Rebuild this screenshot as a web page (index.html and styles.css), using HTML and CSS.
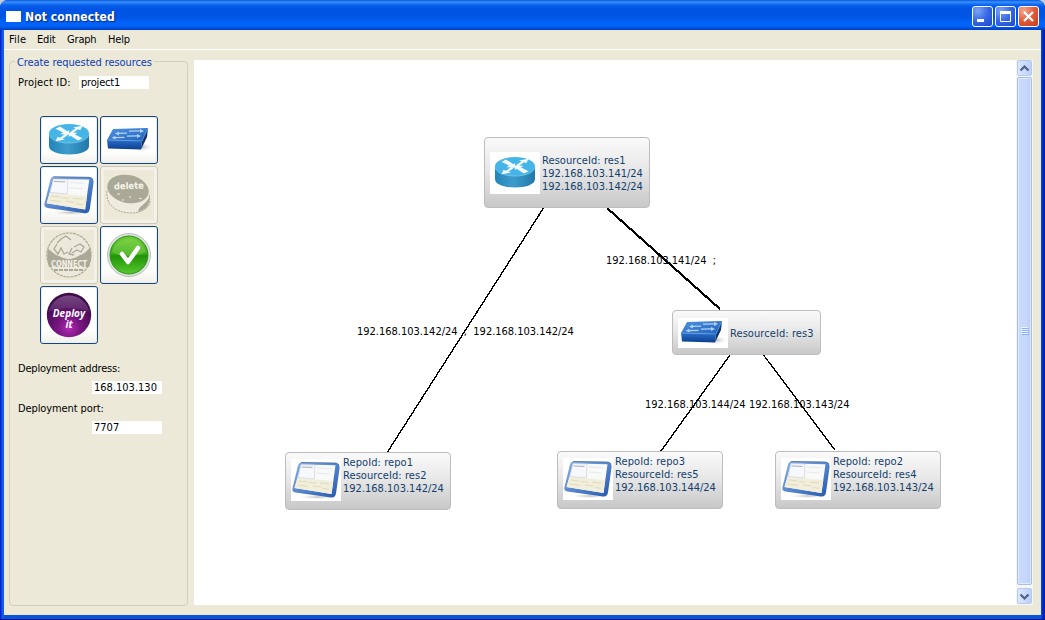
FILE: index.html
```html
<!DOCTYPE html>
<html lang="en">
<head>
<meta charset="utf-8">
<title>Not connected</title>
<link rel="stylesheet" href="styles.css">
</head>
<body>
<svg class="defs" width="0" height="0" aria-hidden="true">
  <defs>
    <linearGradient id="routerSide" x1="0" x2="1" y1="0" y2="0"><stop offset="0" stop-color="#2384b8"/><stop offset=".45" stop-color="#3e9ccb"/><stop offset="1" stop-color="#1f79ab"/></linearGradient>
    <linearGradient id="switchTop" x1="0" x2="1" y1="0" y2="1"><stop offset="0" stop-color="#5193df"/><stop offset="1" stop-color="#1e62bd"/></linearGradient>
    <linearGradient id="switchFront" x1="0" x2="0" y1="0" y2="1"><stop offset="0" stop-color="#2a6fc8"/><stop offset="1" stop-color="#0b3f90"/></linearGradient>
    <linearGradient id="frame" x1="0" x2="1" y1="0" y2="1"><stop offset="0" stop-color="#8db2e2"/><stop offset=".5" stop-color="#5585cc"/><stop offset="1" stop-color="#2458ae"/></linearGradient>
    <linearGradient id="green" x1="0" x2="0" y1="0" y2="1"><stop offset="0" stop-color="#6fce38"/><stop offset=".48" stop-color="#38a917"/><stop offset=".52" stop-color="#209407"/><stop offset="1" stop-color="#58c82d"/></linearGradient>
    <radialGradient id="purple" cx=".5" cy=".8" r=".65"><stop offset="0" stop-color="#b32ab5"/><stop offset=".4" stop-color="#781580"/><stop offset="1" stop-color="#3e0a4c"/></radialGradient>
    <linearGradient id="gloss" x1="0" x2="0" y1="0" y2="1"><stop offset="0" stop-color="#8a5c93"/><stop offset="1" stop-color="#5d286c"/></linearGradient>
    <radialGradient id="shade"><stop offset="0" stop-color="#888" stop-opacity=".6"/><stop offset="1" stop-color="#fff" stop-opacity="0"/></radialGradient>
  </defs>
  <symbol id="router" viewBox="0 0 50 40">
    <path d="M5 13v13c0 5.500 9 8.500 20 8.500s20-3 20-8.500V13z" fill="url(#routerSide)"/>
    <ellipse cx="25" cy="13.500" rx="20" ry="9.500" fill="#45b5e8"/>
    <path d="M5 13.500c0 12.700 40 12.700 40 0" fill="none" stroke="#83cdef" stroke-width=".7"/>
    <path d="M11.500 8.800l4.500-2.300 7.500 4.800 1.800-1.300-.3 4.500-8.500-.3 2.500-1.600zM38.500 18.200l-4.500 2.300-7.500-4.800-1.800 1.300.3-4.500 8.500.3-2.500 1.600zM26 12.300l5.500-4-2.500-.9 9.500-1.600-2.200 4.400-2.300-1-5.500 4zM24 14.700l-5.500 4 2.500.9-9.500 1.600 2.200-4.400 2.300 1 5.500-4z" fill="#f4fbff"/>
  </symbol>
  <symbol id="switch" viewBox="0 0 50 30">
    <ellipse cx="38" cy="22" rx="12" ry="5" fill="url(#shade)"/>
    <path d="M3 15L9 4l35-1-6 13z" fill="url(#switchTop)"/>
    <path d="M3 15l35 1-1 8.500L4 23.500z" fill="url(#switchFront)"/>
    <path d="M38 16l6-13-1 9-6 12.500z" fill="#10356f"/>
    <path d="M3 15l35 1 6-13" fill="none" stroke="#65a4e8" stroke-width=".6"/>
    <path d="M11 8.500l4-2v1.200l8-.3v1.300l-8 .3v1.400zM40 6l-4-2v1.300l-11 .2v1.200l11-.2V8zM7.500 12.700l4-2V12l9-.2V13l-9 .2v1.400zM37 11l-4-2v1.300l-10 .2v1.200l10-.2V13z" fill="#b3d1f2"/>
  </symbol>
  <symbol id="screen" viewBox="0 0 50 42">
    <ellipse cx="27" cy="38" rx="21" ry="2.500" fill="url(#shade)"/>
    <path d="M10 3.500L44 4q5 .4 4.600 5L45 34.500q-.8 4.500-5 4L4.500 33.500q-4-.7-3-4.500L7 6.500Q7.800 3.600 10 3.500z" fill="url(#frame)"/>
    <path d="M10 3.500L44 4q3 .2 4 2" fill="none" stroke="#4069a5" stroke-width=".8"/>
    <path d="M10 5.500l34.500.7L40.500 35 3.500 29z" fill="#f8f9f9"/>
    <path d="M6.800 19l35.400 3-1.700 13L3.500 29z" fill="#f1eedc"/>
    <path d="M10 5.700l14 .3-.7 14-16.300-1.500z" fill="#f7f8fb" stroke="#c8ccd5" stroke-width=".6"/>
    <path d="M10.500 8l11 .4" stroke="#969ca8" stroke-width=".8"/>
    <path d="M26 9l14 .7M25.500 14l13 1" stroke="#e0e3e9" stroke-width=".8"/>
    <path d="M8 22l8 .8M18 23.500l7 .7M29 24l9 1M7 26l10 1.400M22 27l8 1M32 29.500l6 .8" stroke="#d9d1ab" stroke-width=".7"/>
  </symbol>
</svg>

<div class="window">
  <header class="titlebar">
    <span class="app-icon"></span>
    <h1 class="title">Not connected</h1>
    <div class="controls">
      <span class="control"><svg width="19" height="19"><path d="M4 13.500h7" stroke="#fff" stroke-width="3"/></svg></span>
      <span class="control"><svg width="19" height="19"><path d="M4.500 5v9.500h10V5" fill="none" stroke="#fff"/><path d="M4 5.500h11" stroke="#fff" stroke-width="3"/></svg></span>
      <span class="control close"><svg width="19" height="19"><path d="M5 5l9 9M14 5l-9 9" stroke="#fff" stroke-width="2.200"/></svg></span>
    </div>
  </header>
  <nav class="menubar"><span class="m-file">File</span><span class="m-edit">Edit</span><span class="m-graph">Graph</span><span>Help</span></nav>
  <main class="content">
    <section class="panel">
      <h2 class="legend"><span>Create requested resources</span></h2>
      <div class="project"><span class="project-label">Project ID:</span><span class="field">project1</span></div>
      <div class="tools">
        <span class="tool"><svg width="50" height="40"><use href="#router"/></svg></span>
        <span class="tool"><svg width="50" height="32"><use href="#switch"/></svg></span>
        <span class="tool"><svg width="52" height="44"><use href="#screen"/></svg></span>
        <span class="tool disabled">
          <svg width="50" height="50" viewBox="0 0 50 50"><path d="M3 21c-1 9 3 18 16 21 12 3 24-1 27-9l-1-9" fill="#efecdf" stroke="#aba995" stroke-dasharray="2 1"/><ellipse cx="24" cy="19" rx="21" ry="14" fill="#aaa897" transform="rotate(12 24 19)"/><path d="M46 26c0 9-3 13-12 16 1-7 7-6 12-16z" fill="#aaa897"/><text x="25" y="19" class="delete-text" textLength="30" lengthAdjust="spacingAndGlyphs" transform="rotate(-2 25 18)">delete</text><path d="M13 24h3M25 27h2M35 28l3 1M18 30h2" stroke="#efecdf"/></svg>
        </span>
        <span class="tool disabled">
          <svg width="50" height="50" viewBox="0 0 50 50"><circle cx="25" cy="25" r="22" fill="#ece9da" stroke="#aaa897" stroke-width="1.200" stroke-dasharray="3 .7"/><path d="M4 19c5 3 7 6 11 7 7 4 14 4 21-1 5-1 7-5 10-7 2 6 1 12-1 19H5C3 31 3 24 4 19z" fill="#aaa897"/><path d="M13 14l-3 5 4 5 3-6 3 6 4-2M28 18l-3 6 5 1M30 17l6-3 4 3-3 5-4-2-5 3M17 9l5-3 5 4M13 13l4-4" fill="none" stroke="#aaa897" stroke-width="1.300"/><text x="25" y="36.500" class="connect-text" textLength="36" lengthAdjust="spacingAndGlyphs">CONNECT</text><path d="M10 40h30" stroke="#aaa897" stroke-width="2" stroke-dasharray="4 1"/></svg>
        </span>
        <span class="tool">
          <svg width="50" height="50" viewBox="0 0 50 50"><circle cx="25" cy="25" r="21.500" fill="#dfe5df" stroke="#a6b5a6" stroke-width=".8"/><circle cx="25" cy="25" r="19" fill="url(#green)" stroke="#318b23"/><path d="M8 22a17.500 17.500 0 0 1 34 0c-12 5-23 6-34 0z" fill="#a5e66d" opacity=".3"/><path d="M18 24l6 8L34 18" fill="none" stroke="#fff" stroke-width="4.500" stroke-linecap="round" stroke-linejoin="round"/></svg>
        </span>
        <span class="tool">
          <svg width="50" height="50" viewBox="0 0 50 50"><circle cx="25" cy="25" r="22.200" fill="url(#purple)"/><path d="M4.500 22a21 21 0 0 1 41 0c-13-5-28-5-41 0z" fill="url(#gloss)" opacity=".75"/><text class="deploy-text"><tspan x="25" y="27">Deploy</tspan><tspan x="25" y="38">it</tspan></text></svg>
        </span>
      </div>
      <div class="deployment">
        <span class="address-label">Deployment address:</span><span class="field"><span class="address">168.103.130</span></span>
        <span class="port-label">Deployment port:</span><span class="field address">7707</span>
      </div>
    </section>
    <section class="canvas">
      <svg class="edges" width="822" height="545" viewBox="194 60 822 545" shape-rendering="crispEdges">
        <path d="M543.500 208L387.500 452M730 355L661 451M763.500 355L835 450" stroke="#000" stroke-width="1.400" fill="none"/>
        <path d="M607 208L720 309" stroke="#000" stroke-width="2.200"/>
      </svg>
      <span class="edge-label l1">192.168.103.141/24&nbsp; ;</span>
      <span class="edge-label l2">192.168.103.142/24&nbsp; ;&nbsp; 192.168.103.142/24</span>
      <span class="edge-label l3">192.168.103.144/24</span>
      <span class="edge-label l4">192.168.103.143/24</span>
      <div class="node n1"><span class="thumb"><svg width="50" height="40"><use href="#router"/></svg></span><span class="lines"><span>ResourceId: res1</span><span class="ip">192.168.103.141/24</span><span class="ip">192.168.103.142/24</span></span></div>
      <div class="node n3"><span class="thumb low"><svg width="50" height="30"><use href="#switch"/></svg></span><span class="lines">ResourceId: res3</span></div>
      <div class="node repo n2"><span class="thumb"><svg width="50" height="42"><use href="#screen"/></svg></span><span class="lines"><span>RepoId: repo1</span><span>ResourceId: res2</span><span class="ip">192.168.103.142/24</span></span></div>
      <div class="node repo n5"><span class="thumb"><svg width="50" height="42"><use href="#screen"/></svg></span><span class="lines"><span>RepoId: repo3</span><span>ResourceId: res5</span><span class="ip">192.168.103.144/24</span></span></div>
      <div class="node repo n4"><span class="thumb"><svg width="50" height="42"><use href="#screen"/></svg></span><span class="lines"><span>RepoId: repo2</span><span>ResourceId: res4</span><span class="ip">192.168.103.143/24</span></span></div>
    </section>
    <aside class="scrollbar">
      <span class="arrow"><svg width="15" height="15"><path d="M3.500 9.500l4-4 4 4" fill="none" stroke="#4d6185" stroke-width="2.200"/></svg></span>
      <span class="scroll-thumb"><svg width="8" height="8"><path d="M0 .5h7M0 2.500h7M0 4.500h7M0 6.500h7" stroke="#eef4fe"/><path d="M1 1.500h7M1 3.500h7M1 5.500h7M1 7.500h7" stroke="#8cb0f8"/></svg></span>
      <span class="arrow"><svg width="15" height="15"><path d="M3.500 5.500l4 4 4-4" fill="none" stroke="#4d6185" stroke-width="2.200"/></svg></span>
    </aside>
  </main>
</div>
</body>
</html>
```

FILE: styles.css
```css
* { box-sizing: border-box; }
body { margin: 0; overflow: hidden; background: #c6ccd8; font: 11px/13px "DejaVu Sans Condensed", "DejaVu Sans", sans-serif; font-stretch: condensed; letter-spacing: -.18px; color: #000; white-space: nowrap; }
svg { display: block; flex: none; }
.defs { position: absolute; }
.window { width: 1045px; height: 620px; display: flex; flex-direction: column; padding: 0 4px 4px; background: linear-gradient(90deg, #0019cf 0, #0831d9 1px, #166aee 3px, #0855dd 4px, #0855dd 1041px, #0831d9 1042px, #001dab 1044px); border-radius: 8px 8px 0 0; border-bottom: 1px solid #00138c; overflow: hidden; }
.titlebar { height: 30px; flex: none; display: flex; align-items: center; margin: 0 -4px; padding: 2px 6px 0; background: linear-gradient(#0958d9 0, #3890ff 2px, #0a62ed 5px, #0054e3 9px, #0055e5 17px, #0263fb 23px, #0263fb 26px, #0150d8 28px, #003dc4 30px); }
.app-icon { width: 15px; height: 11px; background: #fff; }
.title { margin: 2px 0 0 4px; font: bold 12px/16px "DejaVu Sans Condensed", "DejaVu Sans", sans-serif; font-stretch: condensed; letter-spacing: .1px; color: #fff; text-shadow: 1px 1px 1px #0b2b80; }
.controls { display: flex; gap: 2px; margin-left: auto; }
.control { width: 21px; height: 21px; border: 1px solid #fff; border-radius: 3px; background: radial-gradient(circle at 25% 20%, #7ba4f4, #3568e5 50%, #1e46c8); }
.close { background: radial-gradient(circle at 25% 20%, #f3a58e, #e25b39 50%, #c33d1b); }
.menubar { height: 20px; flex: none; display: flex; padding: 3px 5px 0; background: #ece9d8; border-bottom: 1px solid #fff; }
.m-file { width: 28px; letter-spacing: .2px; }
.m-edit { width: 30px; }
.m-graph { width: 41px; }
.content { flex: 1; min-height: 0; display: flex; padding: 10px 8px 10px 5px; background: #ece9d8; }
.panel { width: 179px; flex: none; margin: 1px 6px 0 0; height: 545px; border: 1px solid #d0d0bf; border-radius: 4px; padding: 0 8px; }
.legend { display: flex; margin: -6px 0 0 -3px; font: inherit; color: #0c3cb4; height: 13px; }
.legend span { background: #ece9d8; padding: 0 2px; letter-spacing: -.08px; }
.project { display: flex; margin-top: 7px; align-items: center; }
.project-label { width: 61px; letter-spacing: .17px; }
.field { width: 70px; height: 13px; background: #fff; padding-left: 2px; overflow: hidden; }
.tools { display: grid; grid-template-columns: 58px 58px; grid-template-rows: 48px 58px 58px 58px; gap: 2px; margin: 27px 0 0 22px; }
.tool { display: flex; align-items: center; justify-content: center; border: 1px solid #17457c; border-radius: 3px; background: linear-gradient(#fff 75%, #f1f0ea); box-shadow: inset 0 0 0 1px #e9eef4; }
.disabled { border-color: #cbc8ba; background: #f4f2e8; box-shadow: none; }
.disabled svg { background: #ece9d8; }
.delete-text { font: bold 9px "DejaVu Sans", sans-serif; letter-spacing: 0; fill: #f7f5e9; text-anchor: middle; }
.connect-text { font: bold 8px "DejaVu Sans", sans-serif; letter-spacing: 0; fill: #f4f1e2; text-anchor: middle; }
.deploy-text { font: italic bold 10px "Open Sans", sans-serif; letter-spacing: 0; fill: #fff; text-anchor: middle; }
.deployment { display: flex; flex-direction: column; margin-top: 18px; }
.address-label { letter-spacing: -.2px; margin-bottom: 6px; }
.port-label { letter-spacing: -.1px; margin: 8px 0 6px; }
.deployment .field { margin: 0 0 0 74px; flex: none; }
.address { letter-spacing: 0; }
.canvas { position: relative; width: 822px; height: 545px; flex: none; background: #fff; }
.edges { position: absolute; inset: 0; }
.edge-label { position: absolute; letter-spacing: -.02px; }
.l1 { left: 412px; top: 194px; }
.l2 { left: 163px; top: 265px; }
.l3 { left: 451px; top: 338px; }
.l4 { left: 555px; top: 338px; }
.node { position: absolute; display: flex; align-items: center; width: 166px; height: 71px; padding-left: 5px; border: 1px solid #bdbdbd; border-radius: 4px; background: linear-gradient(#fafafa, #e8e8e8 45%, #c8c8c8); color: #12406e; }
.lines { display: flex; flex-direction: column; margin-left: 2px; letter-spacing: .08px; }
.ip { letter-spacing: 0; }
.thumb { width: 50px; height: 42px; display: flex; align-items: center; justify-content: center; background: #fff; }
.low { height: 30px; }
.repo { height: 58px; align-items: flex-start; padding-top: 6px; }
.repo .lines { margin-top: -3px; }
.n1 { left: 290px; top: 77px; }
.n1 .lines { margin-top: 2px; }
.n3 { left: 478px; top: 250px; width: 149px; height: 45px; }
.n3 .lines { margin-top: 2px; }
.n2 { left: 91px; top: 392px; }
.n5 { left: 363px; top: 391px; }
.n4 { left: 581px; top: 391px; }
.scrollbar { width: 17px; height: 545px; display: flex; flex-direction: column; align-items: center; background: #f7f7f2; }
.arrow { width: 15px; height: 16px; flex: none; border: 1px solid #b6caef; border-radius: 2px; background: linear-gradient(90deg, #dce7fe, #bacffa); display: flex; align-items: center; justify-content: center; }
.scroll-thumb { width: 15px; height: 508px; flex: none; margin: 1px 0 3px; display: flex; align-items: center; justify-content: center; border: 1px solid #a5bdeb; border-radius: 2px; background: linear-gradient(90deg, #cbdafe, #c5d5fd 70%, #b5c9f7); box-shadow: inset 0 0 0 1px #dfe9ff; }
```
